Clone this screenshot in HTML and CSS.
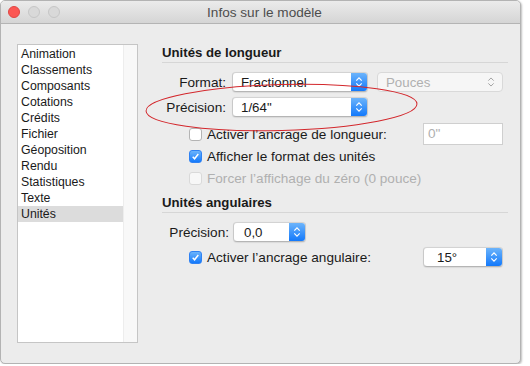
FILE: index.html
```html
<!DOCTYPE html>
<html lang="fr">
  <head>
    <meta charset="UTF-8" />
    <title>Infos sur le modèle</title>
    <link rel="stylesheet" href="styles.css">
  </head>
  <body>
    <div class="window">
      <div class="titlebar">
        <div class="lights">
          <span class="light light-close"></span>
          <span class="light"></span>
          <span class="light"></span>
        </div>
        <div class="title">Infos sur le modèle</div>
      </div>

      <div class="content">
        <div class="sidebar">
          <ul class="list">
            <li>Animation</li>
            <li>Classements</li>
            <li>Composants</li>
            <li>Cotations</li>
            <li>Crédits</li>
            <li>Fichier</li>
            <li>Géoposition</li>
            <li>Rendu</li>
            <li>Statistiques</li>
            <li>Texte</li>
            <li class="selected">Unités</li>
          </ul>
          <div class="scroll-strip"></div>
        </div>

        <div class="panel">
          <h2 class="section-title">Unités de longueur</h2>

          <div class="row row-first">
            <label class="field-label">Format:</label>
            <div class="select select-wide">
              <span class="select-value">Fractionnel</span>
              <span class="select-arrow"><svg viewBox="0 0 16 20"><path d="M5 8.5 8 5.5 11 8.5M5 11.5 8 14.5 11 11.5" /></svg></span>
            </div>
            <div class="select select-disabled">
              <span class="select-value">Pouces</span>
              <span class="select-arrow"><svg viewBox="0 0 16 20"><path d="M5 8.5 8 5.5 11 8.5M5 11.5 8 14.5 11 11.5" /></svg></span>
            </div>
          </div>

          <div class="row row-next">
            <label class="field-label">Précision:</label>
            <div class="select select-wide">
              <span class="select-value">1/64"</span>
              <span class="select-arrow"><svg viewBox="0 0 16 20"><path d="M5 8.5 8 5.5 11 8.5M5 11.5 8 14.5 11 11.5" /></svg></span>
            </div>
          </div>

          <div class="check-row check-row-first">
            <span class="checkbox"></span>
            <span class="check-text">Activer l’ancrage de longueur:</span>
            <span class="text-field">0"</span>
          </div>
          <div class="check-row">
            <span class="checkbox checked"><svg viewBox="0 0 13 13"><path d="M3.2 6.8 5.4 9.2 9.8 3.6" /></svg></span>
            <span class="check-text">Afficher le format des unités</span>
          </div>
          <div class="check-row disabled">
            <span class="checkbox"></span>
            <span class="check-text">Forcer l’affichage du zéro (0 pouce)</span>
          </div>

          <h2 class="section-title section-second">Unités angulaires</h2>

          <div class="row row-first">
            <label class="field-label field-label-angle">Précision:</label>
            <div class="select select-small">
              <span class="select-value">0,0</span>
              <span class="select-arrow"><svg viewBox="0 0 16 20"><path d="M5 8.5 8 5.5 11 8.5M5 11.5 8 14.5 11 11.5" /></svg></span>
            </div>
          </div>

          <div class="check-row check-row-angle">
            <span class="checkbox checked"><svg viewBox="0 0 13 13"><path d="M3.2 6.8 5.4 9.2 9.8 3.6" /></svg></span>
            <span class="check-text">Activer l’ancrage angulaire:</span>
            <div class="select select-angle">
              <span class="select-value">15°</span>
              <span class="select-arrow"><svg viewBox="0 0 16 20"><path d="M5 8.5 8 5.5 11 8.5M5 11.5 8 14.5 11 11.5" /></svg></span>
            </div>
          </div>
        </div>
      </div>

      <svg class="annotation" viewBox="0 0 521 364" width="521" height="364">
        <ellipse cx="281.5" cy="107.5" rx="135.5" ry="23" transform="rotate(-1.5 281.5 107.5)" />
      </svg>
    </div>
  </body>
</html>
```

FILE: styles.css
```css
:root {
  --win-bg: #ececec;
  --win-border: #b3b3b3;
  --text: #1a1a1a;
  --text-muted: #4d4d4d;
  --text-disabled: #b0b0b0;
  --line: #d6d6d6;
  --blue-top: #6cb4fb;
  --blue-bottom: #1379fb;
}

* {
  margin: 0;
  padding: 0;
  box-sizing: border-box;
}

body {
  font-family: "Liberation Sans", Arial, sans-serif;
  font-size: 13px;
  color: var(--text);
  background: #ffffff;
}

.window {
  position: relative;
  width: 521px;
  height: 364px;
  background: var(--win-bg);
  border: 1px solid var(--win-border);
  border-radius: 5px;
  overflow: hidden;
  box-shadow: 1px 1px 2px rgba(0, 0, 0, 0.25);
}

/* title bar */

.titlebar {
  height: 23px;
  display: flex;
  align-items: center;
  background: linear-gradient(#ebebeb, #d5d5d5);
  border-bottom: 1px solid #b4b4b4;
  position: relative;
}

.lights {
  display: flex;
  gap: 8px;
  padding-left: 7px;
}

.light {
  width: 12px;
  height: 12px;
  border-radius: 50%;
  background: #d9d9d9;
  border: 1px solid #c6c6c6;
}

.light-close {
  background: #fc5753;
  border-color: #df4744;
}

.title {
  position: absolute;
  left: 8px;
  right: 0;
  text-align: center;
  color: var(--text-muted);
  font-size: 13.6px;
}

/* content */

.content {
  display: flex;
  padding: 20px 0 0 16px;
}

.sidebar {
  width: 121px;
  height: 299px;
  display: flex;
  background: #ffffff;
  border: 1px solid #c5c5c5;
}

.list {
  list-style: none;
  width: 105px;
  padding-top: 1px;
  font-size: 12.3px;
}

.list li {
  height: 16px;
  line-height: 16px;
  padding-left: 3px;
}

.list li.selected {
  background: #dcdcdc;
}

.scroll-strip {
  flex: 1;
  background: #f8f8f8;
  border-left: 1px solid #ededed;
}

.panel {
  width: 346px;
  margin-left: 24px;
  padding-top: 1px;
  font-size: 13.6px;
}

.section-title {
  font-size: 13.2px;
  font-weight: bold;
  line-height: 16px;
  padding-bottom: 1px;
  border-bottom: 1px solid var(--line);
}

.section-second {
  margin-top: 6px;
}

.row {
  display: flex;
  align-items: center;
  height: 20px;
}

.row-first {
  margin-top: 9px;
}

.row-next {
  margin-top: 5px;
}

.field-label {
  width: 64px;
  text-align: right;
  margin-right: 6px;
  white-space: nowrap;
}

.field-label-angle {
  width: 67px;
  margin-right: 4px;
}

/* pop-up buttons */

.select {
  height: 20px;
  display: flex;
  align-items: center;
  background: #ffffff;
  border: 1px solid #c9c9c9;
  border-top-color: #d3d3d3;
  border-bottom-color: #b5b5b5;
  border-radius: 4px;
  overflow: hidden;
  box-shadow: 0 0.5px 1px rgba(0, 0, 0, 0.08);
}

.select-value {
  flex: 1;
  padding-left: 8px;
  white-space: nowrap;
  font-size: 13.3px;
}

.select-arrow {
  width: 16px;
  height: 100%;
  background: linear-gradient(var(--blue-top), var(--blue-bottom));
  display: flex;
}

.select-arrow svg {
  width: 16px;
  height: 18px;
}

.select-arrow path {
  fill: none;
  stroke: #ffffff;
  stroke-width: 1.3;
}

.select-wide {
  width: 136px;
}

.select-small {
  width: 73px;
}

.select-small .select-value {
  padding-left: 10px;
}

.select-angle {
  width: 80px;
  margin-left: auto;
  margin-right: 5px;
}

.select-angle .select-value {
  padding-left: 13px;
}

.select-disabled {
  width: 126px;
  margin-left: 9px;
  background: #f6f6f6;
  border-color: #d9d9d9;
  box-shadow: none;
}

.select-disabled .select-value {
  color: var(--text-disabled);
}

.select-disabled .select-arrow {
  background: none;
  margin-right: 3px;
}

.select-disabled .select-arrow path {
  stroke: #9a9a9a;
  stroke-width: 1;
}

/* checkboxes */

.check-row {
  display: flex;
  align-items: center;
  height: 22px;
  padding-left: 27px;
  white-space: nowrap;
}

.check-row-first {
  margin-top: 6px;
}

.check-row-angle {
  margin-top: 4px;
}

.checkbox {
  width: 13px;
  height: 13px;
  margin-right: 5px;
  background: #ffffff;
  border: 1px solid #b4b4b4;
  border-radius: 3px;
  display: flex;
  flex-shrink: 0;
}

.checkbox.checked {
  background: linear-gradient(var(--blue-top), var(--blue-bottom));
  border-color: #2f82f3;
}

.checkbox svg {
  width: 11px;
  height: 11px;
}

.checkbox path {
  fill: none;
  stroke: #ffffff;
  stroke-width: 1.7;
}

.check-row.disabled .checkbox {
  border-color: #d9d9d9;
  background: #f7f7f7;
}

.check-row.disabled .check-text {
  color: var(--text-disabled);
}

.text-field {
  width: 80px;
  height: 22px;
  margin-left: auto;
  margin-right: 5px;
  padding-left: 4px;
  line-height: 20px;
  color: var(--text-disabled);
  background: #ffffff;
  border: 1px solid #cfcfcf;
}

/* red hand-drawn mark */

.annotation {
  position: absolute;
  left: -1px;
  top: -1px;
  pointer-events: none;
}

.annotation ellipse {
  fill: none;
  stroke: #d3272c;
  stroke-width: 1;
}
```
